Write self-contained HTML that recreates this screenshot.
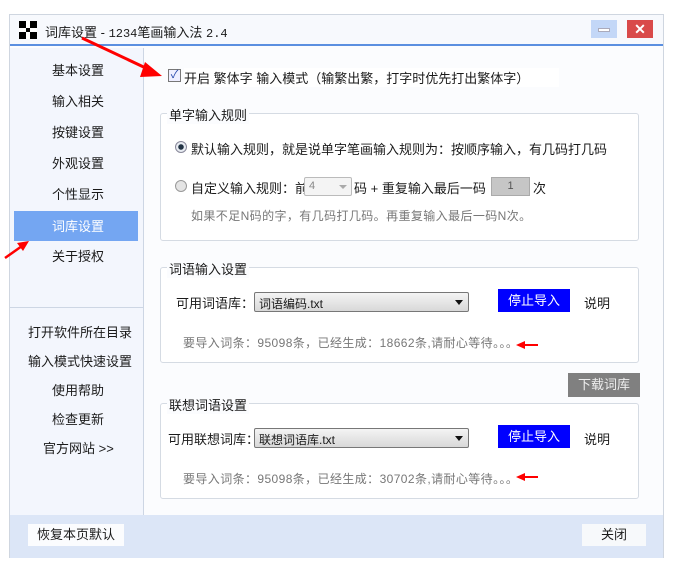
<!DOCTYPE html>
<html><head><meta charset="utf-8"><style>
*{margin:0;padding:0;box-sizing:border-box}
body{width:677px;height:578px;background:#fff;font-family:"Liberation Sans","Noto Sans CJK SC",sans-serif;font-size:13px;color:#1a1a1a;position:relative;overflow:hidden}
.a{position:absolute;white-space:nowrap}
.win{position:absolute;left:9px;top:14px;width:655px;height:544px;border:1px solid #cfd6e0;background:#fbfcfe}
.title{position:absolute;left:0;top:0;width:653px;height:31px;background:#f7f9fd;border-bottom:2px solid #5b8fe0}
.side{position:absolute;left:0;top:33px;width:134px;height:510px;background:#f3f6fd;border-right:1px solid #cdd6e4}
.grp{position:absolute;border:1px solid #d5dbe3;border-radius:3px;background:#fff}
.lg{position:absolute;top:-9px;left:6px;background:#fbfcfe;padding:0 2px;font-size:13px}
.dd{position:absolute;height:20px;border:1px solid #777;border-radius:2px;background:linear-gradient(#f4f4f4,#d8d8d8);font-size:12px;padding:2px 4px}
.dd:after{content:"";position:absolute;right:5px;top:7px;border:4px solid transparent;border-top:5px solid #111}
.btn{position:absolute;background:#0000ff;color:#fff;text-align:center;line-height:23px;font-size:13px}
.hint{color:#777;font-size:12px;letter-spacing:0.4px}
</style></head><body>
<div class="win">
 <div class="title">
  <svg class="a" style="left:9px;top:6px" width="18" height="18"><rect x="0" y="0" width="18" height="18" fill="#000"/><rect x="7" y="0" width="4" height="7" fill="#fff"/><rect x="0" y="7" width="7" height="4" fill="#fff"/><rect x="11" y="7" width="7" height="4" fill="#fff"/><rect x="7" y="11" width="4" height="7" fill="#fff"/></svg>
  <div class="a" style="left:35px;top:7px;font-size:13px">词库设置 - <span style="font-family:'Liberation Mono',monospace;font-size:12px">1234</span>笔画输入法 <span style="font-family:'Liberation Mono',monospace;font-size:12px">2.4</span></div>
  <div class="a" style="left:581px;top:5px;width:26px;height:18px;background:#c3d7f7"><div style="position:absolute;left:7px;top:8px;width:12px;height:4px;background:#fff;border:1px solid #aab"></div></div>
  <div class="a" style="left:617px;top:5px;width:26px;height:18px;background:#d94a4a;color:#fff;font-weight:bold;text-align:center;line-height:18px;font-size:14px">✕</div>
 </div>
 <div class="side">
  <div class="a" style="left:4px;top:163px;width:124px;height:30px;background:#74a6f2"></div>
  <div class="a" style="left:42px;top:12px">基本设置</div>
  <div class="a" style="left:42px;top:43px">输入相关</div>
  <div class="a" style="left:42px;top:74px">按键设置</div>
  <div class="a" style="left:42px;top:105px">外观设置</div>
  <div class="a" style="left:42px;top:136px">个性显示</div>
  <div class="a" style="left:42px;top:168px;color:#fff">词库设置</div>
  <div class="a" style="left:42px;top:198px">关于授权</div>
  <div class="a" style="left:0;top:259px;width:134px;height:1px;background:#cdd6e4"></div>
  <div class="a" style="left:18px;top:274px">打开软件所在目录</div>
  <div class="a" style="left:18px;top:303px">输入模式快速设置</div>
  <div class="a" style="left:42px;top:332px">使用帮助</div>
  <div class="a" style="left:42px;top:361px">检查更新</div>
  <div class="a" style="left:33px;top:390px">官方网站 &gt;&gt;</div>
 </div>
 <div class="a" style="left:0;top:500px;width:653px;height:43px;background:#dce6f7"></div>
 <div class="a" style="left:18px;top:509px;width:96px;height:22px;background:#fbfcfe;text-align:center;line-height:22px">恢复本页默认</div>
 <div class="a" style="left:572px;top:509px;width:64px;height:22px;background:#f7f9fb;text-align:center;line-height:22px">关闭</div>
</div>

<div class="a" style="left:168px;top:69px;width:13px;height:13px;border:1px solid #777;background:#eef;color:#2244aa;font-size:11px;line-height:11px;text-align:center">✓</div>
<div class="a" style="left:184px;top:68px;background:#fff;padding-right:30px">开启 繁体字 输入模式（输繁出繁，打字时优先打出繁体字）</div>

<div class="grp" style="left:160px;top:113px;width:479px;height:128px"><div class="lg">单字输入规则</div></div>
<div class="a" style="left:175px;top:141px;width:12px;height:12px;border-radius:50%;border:1px solid #889;background:radial-gradient(#234 0 2.5px,#e8ecf2 3px)"></div>
<div class="a" style="left:191px;top:139px">默认输入规则，就是说单字笔画输入规则为：按顺序输入，有几码打几码</div>
<div class="a" style="left:175px;top:180px;width:12px;height:12px;border-radius:50%;border:1px solid #999;background:#e4e4e4"></div>
<div class="a" style="left:191px;top:178px">自定义输入规则：前</div>
<div class="a" style="left:304px;top:177px;width:48px;height:19px;border:1px solid #bbb;border-radius:2px;background:#f4f4f4;color:#888;font-size:11px;padding:2px 4px">4<span style="position:absolute;right:4px;top:7px;border:4px solid transparent;border-top:4px solid #aaa"></span></div>
<div class="a" style="left:354px;top:178px">码 + 重复输入最后一码</div>
<div class="a" style="left:491px;top:177px;width:39px;height:19px;border:1px solid #aaa;background:#c6c6c6;color:#555;font-size:11px;text-align:center;line-height:17px">1</div>
<div class="a" style="left:533px;top:178px">次</div>
<div class="a hint" style="left:191px;top:207px">如果不足N码的字，有几码打几码。再重复输入最后一码N次。</div>

<div class="grp" style="left:160px;top:267px;width:479px;height:96px"><div class="lg">词语输入设置</div></div>
<div class="a" style="left:176px;top:293px">可用词语库：</div>
<div class="dd" style="left:254px;top:292px;width:215px">词语编码.txt</div>
<div class="btn" style="left:498px;top:289px;width:72px">停止导入</div>
<div class="a" style="left:584px;top:293px">说明</div>
<div class="a hint" style="left:183px;top:334px">要导入词条：95098条，已经生成：18662条,请耐心等待。。。</div>

<div class="a" style="left:568px;top:373px;width:72px;height:24px;background:#808080;color:#eee;text-align:center;line-height:24px">下载词库</div>

<div class="grp" style="left:160px;top:403px;width:479px;height:96px"><div class="lg">联想词语设置</div></div>
<div class="a" style="left:168px;top:429px">可用联想词库：</div>
<div class="dd" style="left:254px;top:428px;width:215px">联想词语库.txt</div>
<div class="btn" style="left:498px;top:425px;width:72px">停止导入</div>
<div class="a" style="left:584px;top:429px">说明</div>
<div class="a hint" style="left:183px;top:470px">要导入词条：95098条，已经生成：30702条,请耐心等待。。。</div>

<svg class="a" style="left:0;top:0" width="677" height="578">
 <g fill="#f00" stroke="#f00">
  <line x1="82" y1="38" x2="150" y2="70" stroke-width="3"/><polygon points="162,76 145,62 140,77" stroke="none"/>
  <line x1="5" y1="258" x2="22" y2="246" stroke-width="2.5"/><polygon points="29,241 17,243 23,251" stroke="none"/>
  <line x1="522" y1="345" x2="538" y2="345" stroke-width="2"/><polygon points="516,345 525,341 525,349" stroke="none"/>
  <line x1="522" y1="477" x2="538" y2="477" stroke-width="2"/><polygon points="516,477 525,473 525,481" stroke="none"/>
 </g>
</svg>
</body></html>
